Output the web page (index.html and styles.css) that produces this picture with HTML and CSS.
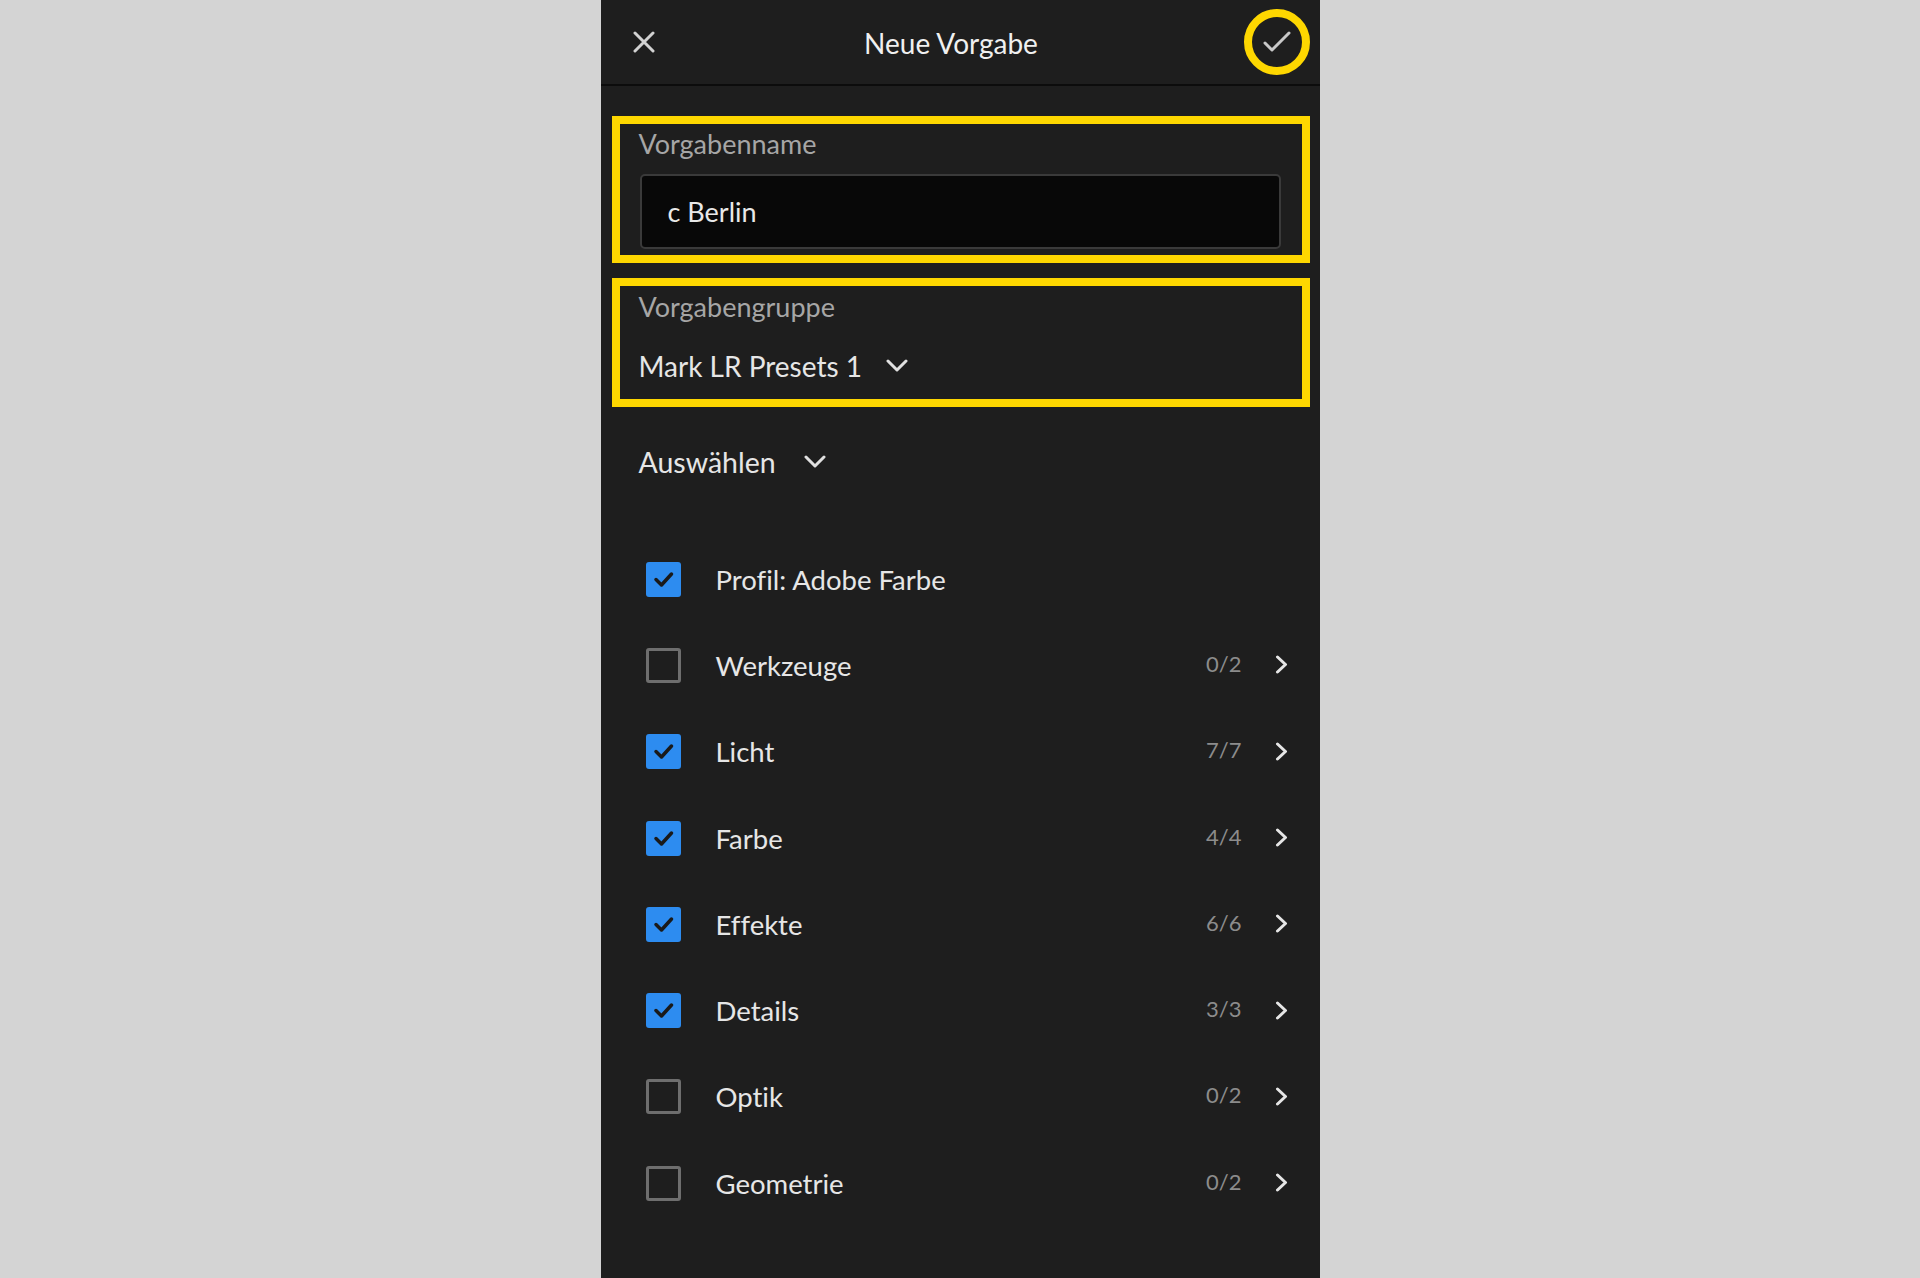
FILE: index.html
```html
<!DOCTYPE html>
<html lang="de">
<head>
  <meta charset="UTF-8">
  <title>Neue Vorgabe</title>
  <link rel="stylesheet" href="styles.css">
</head>
<body>

  <div class="telefon">

    <div class="kopf">
      <button class="schliessen" aria-label="Schließen">
        <svg width="22" height="22" viewBox="0 0 22 22"><path d="M2 2 L20 20 M20 2 L2 20" stroke="#d2d2d2" stroke-width="3" stroke-linecap="round"/></svg>
      </button>
      <h1 class="titel">Neue Vorgabe</h1>
      <button class="bestaetigen" aria-label="Bestätigen">
        <svg width="28" height="22" viewBox="0 0 28 22"><polyline points="2,12 9,19 26,2" fill="none" stroke="#c8c8c8" stroke-width="3" stroke-linecap="round" stroke-linejoin="round"/></svg>
      </button>
    </div>

    <div class="feld feld-name">
      <label class="feld-label" for="name">Vorgabenname</label>
      <div class="eingabe" id="name">c Berlin</div>
    </div>

    <div class="feld feld-gruppe">
      <div class="feld-label">Vorgabengruppe</div>
      <div class="auswahl">
        <span>Mark LR Presets 1</span>
        <svg class="pfeil-unten" width="22" height="14" viewBox="0 0 22 14"><polyline points="2,2 11,11 20,2" fill="none" stroke="#e0e0e0" stroke-width="3" stroke-linecap="round" stroke-linejoin="round"/></svg>
      </div>
    </div>

    <div class="auswaehlen">
      <span>Auswählen</span>
      <svg class="pfeil-unten" width="22" height="14" viewBox="0 0 22 14"><polyline points="2,2 11,11 20,2" fill="none" stroke="#e0e0e0" stroke-width="3" stroke-linecap="round" stroke-linejoin="round"/></svg>
    </div>

    <ul class="liste" id="liste"></ul>

  </div>

  <script>
    const einstellungen = [
      { name: "Profil: Adobe Farbe", an: true, anzahl: null },
      { name: "Werkzeuge", an: false, anzahl: "0/2" },
      { name: "Licht", an: true, anzahl: "7/7" },
      { name: "Farbe", an: true, anzahl: "4/4" },
      { name: "Effekte", an: true, anzahl: "6/6" },
      { name: "Details", an: true, anzahl: "3/3" },
      { name: "Optik", an: false, anzahl: "0/2" },
      { name: "Geometrie", an: false, anzahl: "0/2" }
    ];

    const haken = '<svg width="35" height="35" viewBox="0 0 35 35"><polyline points="10,17.5 15.5,23 25.5,12" fill="none" stroke="#1a1a1a" stroke-width="3.5" stroke-linecap="round" stroke-linejoin="round"/></svg>';
    const pfeil = '<svg width="13" height="19" viewBox="0 0 13 19"><polyline points="2.5,2 10.5,9.5 2.5,17" fill="none" stroke="#e6e6e6" stroke-width="3" stroke-linecap="round" stroke-linejoin="round"/></svg>';

    function zeichneListe() {
      const liste = document.getElementById("liste");
      liste.innerHTML = "";

      einstellungen.forEach((item, index) => {
        const li = document.createElement("li");
        li.className = "zeile";

        const box = document.createElement("span");
        box.className = item.an ? "kasten an" : "kasten";
        box.innerHTML = item.an ? haken : "";
        box.onclick = () => { item.an = !item.an; zeichneListe(); };

        const text = document.createElement("span");
        text.className = "zeile-text";
        text.textContent = item.name;

        li.appendChild(box);
        li.appendChild(text);

        if (item.anzahl) {
          const zahl = document.createElement("span");
          zahl.className = "anzahl";
          zahl.textContent = item.anzahl;
          const weiter = document.createElement("span");
          weiter.className = "weiter";
          weiter.innerHTML = pfeil;
          li.appendChild(zahl);
          li.appendChild(weiter);
        }

        liste.appendChild(li);
      });
    }

    zeichneListe();
  </script>

</body>
</html>
```

FILE: styles.css
```css
body {
  font-family: Lato, "Open Sans", sans-serif;
  font-variant-ligatures: none;
  background-color: #d4d4d4;
  margin: 0;
}

.telefon {
  width: 719px;
  height: 1278px;
  margin: 0 auto;
  background: #1e1e1e;
  color: #e6e6e6;
  overflow: hidden;
}

button {
  background: none;
  border: none;
  padding: 0;
  cursor: pointer;
}

.kopf {
  display: flex;
  align-items: center;
  height: 84px;
  padding: 0 10px 0 32px;
  border-bottom: 2px solid #0c0c0c;
}

.schliessen {
  width: 22px;
  height: 22px;
  display: flex;
}

.titel {
  flex: 1;
  margin: 0;
  padding: 2px 0 0 4px;
  text-align: center;
  font-size: 28px;
  font-weight: normal;
  color: #f0f0f0;
}

.bestaetigen {
  width: 66px;
  height: 66px;
  box-sizing: border-box;
  border: 8px solid #fed700;
  border-radius: 50%;
  display: flex;
  align-items: center;
  justify-content: center;
}

.feld {
  border: 8px solid #fed700;
  margin: 0 10px 0 11px;
  padding: 0 21px 0 19px;
}

.feld-name {
  margin-top: 30px;
  padding-top: 5px;
  padding-bottom: 6px;
}

.feld-gruppe {
  margin-top: 15px;
  padding-top: 6px;
  padding-bottom: 15px;
}

.feld-label {
  display: block;
  font-size: 27px;
  line-height: 30px;
  color: #a6a6a6;
}

.eingabe {
  margin: 15px 0 0 1px;
  height: 75px;
  box-sizing: border-box;
  background: #080808;
  border: 2px solid #3a3a3a;
  border-radius: 5px;
  padding-left: 26px;
  display: flex;
  align-items: center;
  font-size: 27px;
  color: #e8e8e8;
}

.auswahl {
  margin-top: 26px;
  height: 36px;
  display: flex;
  align-items: center;
  gap: 24px;
  font-size: 28px;
  color: #e6e6e6;
}

.auswaehlen {
  margin-top: 35px;
  padding-left: 38px;
  height: 40px;
  display: flex;
  align-items: center;
  gap: 28px;
  font-size: 28.5px;
}

.liste {
  list-style: none;
  margin: 54px 0 0;
  padding: 0;
}

.zeile {
  height: 86.3px;
  display: flex;
  align-items: center;
  padding: 0 32px 0 45px;
  font-size: 27.5px;
}

.kasten {
  width: 35px;
  height: 35px;
  box-sizing: border-box;
  border: 3px solid #6e6e6e;
  border-radius: 3px;
  flex-shrink: 0;
  cursor: pointer;
}

.kasten.an {
  background: #2d8cf0;
  border: none;
}

.kasten svg {
  display: block;
}

.zeile-text {
  margin-left: 35px;
  flex: 1;
}

.anzahl {
  font-size: 22px;
  color: #8c8c8c;
  margin-right: 33px;
  margin-top: -4px;
}

.weiter {
  display: flex;
  margin-top: -1px;
}
```
